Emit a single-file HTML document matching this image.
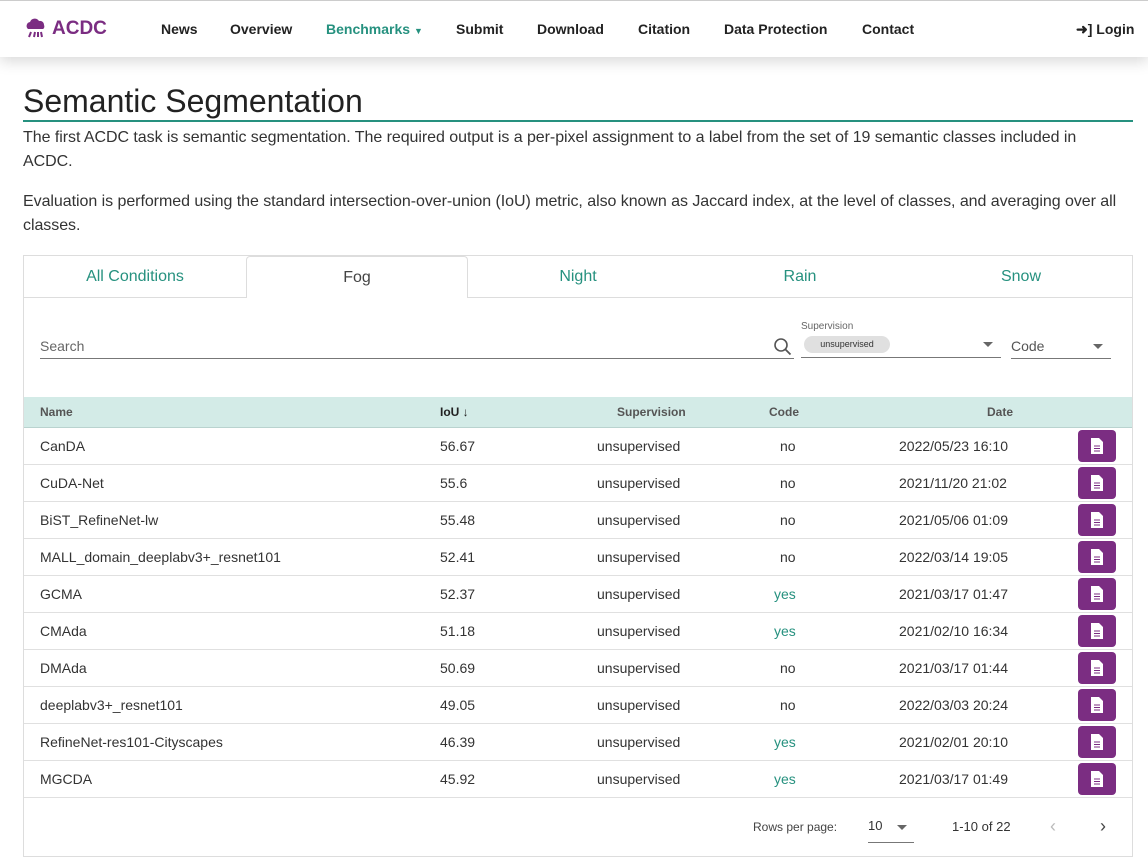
<!DOCTYPE html>
<html><head><meta charset="utf-8">
<style>
*{box-sizing:border-box;margin:0;padding:0}
body{width:1148px;height:866px;overflow:hidden;background:#fff;font-family:"Liberation Sans",sans-serif;color:#222;position:relative}
.abs{position:absolute}
.nav{position:absolute;left:0;top:0;width:1148px;height:57px;background:#fff;border-top:1px solid #ccc;box-shadow:0 4px 14px rgba(0,0,0,.16);z-index:2}
.nav a{position:absolute;top:20px;font-size:14px;font-weight:bold;color:#222;text-decoration:none}
h1{position:absolute;left:23px;top:83px;font-size:32px;font-weight:normal;color:#222}
.line{position:absolute;left:23px;top:120px;width:1110px;height:2px;background:#26917f}
p{position:absolute;left:23px;width:1125px;font-size:16px;line-height:24px;color:#333;letter-spacing:-0.05px;white-space:nowrap}
.card{position:absolute;left:23px;top:255px;width:1110px;height:602px;border:1px solid #ddd}
.tab{position:absolute;top:0;height:42px;width:222px;text-align:center;line-height:42px;font-size:16px;color:#26917f;border-bottom:1px solid #ddd}
.tab.act{color:#444;border:1px solid #ddd;border-bottom:none;border-radius:4px 4px 0 0;background:#fff}
.row{position:absolute;left:0;width:1108px;height:37px;border-bottom:1px solid #e0e0e0;font-size:14px;color:#333}
.row span{position:absolute;top:10px}
.btn{position:absolute;left:1054px;top:2px;width:38px;height:32px;background:#7b2d82;border-radius:4px}
.hdr{position:absolute;left:0;top:141px;width:1108px;height:31px;background:#d3ebe7;border-bottom:1px solid #b9d3cf;font-size:12px;color:#555;font-weight:bold}
.hdr span{position:absolute;top:8px}
</style></head><body>
<div class="nav">
<svg class="abs" style="left:25px;top:16px" width="22" height="22" viewBox="0 0 22 22"><path d="M3 12a4 4 0 0 1 2-7 5 5 0 0 1 9-1 4 4 0 0 1 5 4 3 3 0 0 1-1 4z" fill="#7b2d82"/><path d="M6 15l-2 5M10 15l-1 5M13 15l0 5M16 15l1 5" stroke="#7b2d82" stroke-width="2"/></svg>
<div class="abs" style="left:52px;top:17px;font-size:19px;font-weight:bold;color:#7b2d82">ACDC</div>
<a style="left:161px">News</a><a style="left:230px">Overview</a>
<a style="left:326px;color:#26917f">Benchmarks <span style="font-size:9px">▼</span></a>
<a style="left:456px">Submit</a><a style="left:537px">Download</a><a style="left:638px">Citation</a><a style="left:724px">Data Protection</a><a style="left:862px">Contact</a>
<a style="left:1076px">➜] Login</a>
</div>
<h1>Semantic Segmentation</h1>
<div class="line"></div>
<p style="top:126px">The first ACDC task is semantic segmentation. The required output is a per-pixel assignment to a label from the set of 19 semantic classes included in<br>ACDC.</p>
<p style="top:190px">Evaluation is performed using the standard intersection-over-union (IoU) metric, also known as Jaccard index, at the level of classes, and averaging over all<br>classes.</p>
<div class="card">
<div class="tab" style="left:0">All Conditions</div>
<div class="tab act" style="left:222px">Fog</div>
<div class="tab" style="left:443px">Night</div>
<div class="tab" style="left:665px">Rain</div>
<div class="tab" style="left:886px;width:222px">Snow</div>
<div class="abs" style="left:16px;top:82px;width:754px;height:21px;border-bottom:1px solid #777;font-size:14px;color:#666">Search</div>
<svg class="abs" style="left:749px;top:81px" width="20" height="20" viewBox="0 0 20 20"><circle cx="8" cy="8" r="6" fill="none" stroke="#555" stroke-width="1.6"/><path d="M12.5 12.5l5 5" stroke="#555" stroke-width="1.8"/></svg>
<div class="abs" style="left:777px;top:65px;font-size:10px;color:#666">Supervision</div>
<div class="abs" style="left:777px;top:81px;width:200px;height:21px;border-bottom:1px solid #777"></div>
<div class="abs" style="left:780px;top:80px;width:86px;height:17px;border-radius:9px;background:#e0e0e0;font-size:9px;color:#333;text-align:center;line-height:17px">unsupervised</div>
<div class="abs" style="left:959px;top:86px;width:0;height:0;border-left:5px solid transparent;border-right:5px solid transparent;border-top:5px solid #666"></div>
<div class="abs" style="left:987px;top:82px;width:100px;height:21px;border-bottom:1px solid #777;font-size:14px;color:#555">Code</div>
<div class="abs" style="left:1069px;top:88px;width:0;height:0;border-left:5px solid transparent;border-right:5px solid transparent;border-top:5px solid #666"></div>
<div class="hdr"><span style="left:16px">Name</span><span style="left:416px;color:#222">IoU ↓</span><span style="left:593px">Supervision</span><span style="left:745px">Code</span><span style="left:963px">Date</span></div>
<div id="rows"></div>
<div class="abs" style="left:729px;top:564px;font-size:12px;color:#444">Rows per page:</div>
<div class="abs" style="left:844px;top:562px;width:46px;height:25px;border-bottom:1px solid #777;font-size:13px;color:#333">10</div>
<div class="abs" style="left:873px;top:569px;width:0;height:0;border-left:5px solid transparent;border-right:5px solid transparent;border-top:5px solid #666"></div>
<div class="abs" style="left:928px;top:563px;font-size:13px;color:#333">1-10 of 22</div>
<div class="abs" style="left:1026px;top:560px;font-size:18px;color:#bbb">‹</div>
<div class="abs" style="left:1076px;top:560px;font-size:18px;color:#444">›</div>
</div>
<script>
var d=[["CanDA","56.67","no","2022/05/23 16:10"],["CuDA-Net","55.6","no","2021/11/20 21:02"],["BiST_RefineNet-lw","55.48","no","2021/05/06 01:09"],["MALL_domain_deeplabv3+_resnet101","52.41","no","2022/03/14 19:05"],["GCMA","52.37","yes","2021/03/17 01:47"],["CMAda","51.18","yes","2021/02/10 16:34"],["DMAda","50.69","no","2021/03/17 01:44"],["deeplabv3+_resnet101","49.05","no","2022/03/03 20:24"],["RefineNet-res101-Cityscapes","46.39","yes","2021/02/01 20:10"],["MGCDA","45.92","yes","2021/03/17 01:49"]];
var h="";d.forEach(function(r,i){h+='<div class="row" style="top:'+(172+i*37)+'px"><span style="left:16px">'+r[0]+'</span><span style="left:416px">'+r[1]+'</span><span style="left:573px">unsupervised</span><span style="left:'+(r[2]=="yes"?750:756)+'px;color:'+(r[2]=="yes"?"#26917f":"#333")+'">'+r[2]+'</span><span style="left:875px">'+r[3]+'</span><div class="btn"><svg style="position:absolute;left:12px;top:8px" width="14" height="16" viewBox="0 0 14 16"><path d="M1 0h8l4 4v12H1z" fill="#fff"/><path d="M4 8h6M4 10.5h6M4 13h6" stroke="#7b2d82" stroke-width="1"/></svg></div></div>'});
document.getElementById("rows").innerHTML=h;
</script>
</body></html>
